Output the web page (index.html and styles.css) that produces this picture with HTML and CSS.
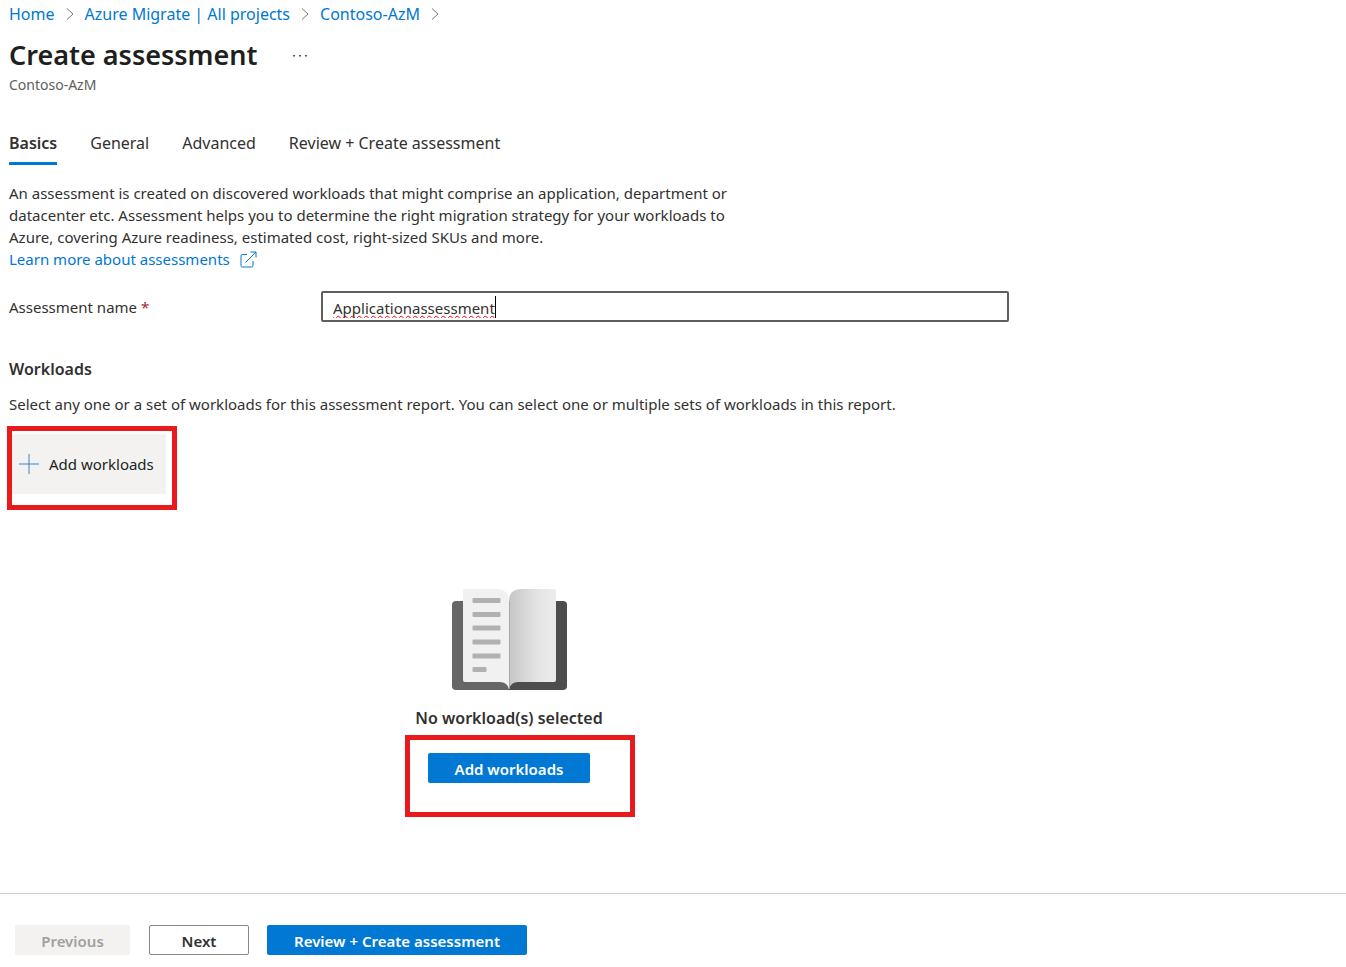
FILE: index.html
```html
<!DOCTYPE html>
<html lang="en">
<head>
<meta charset="utf-8">
<title>Create assessment</title>
<link rel="stylesheet" href="styles.css">
</head>
<body>
<main class="page">
  <nav class="breadcrumb" aria-label="Breadcrumb">
    <a href="#">Home</a>
    <svg class="chevron" viewBox="0 0 8 14"><path d="M1 1.500L7 7L1 12.500"/></svg>
    <a href="#">Azure Migrate | All projects</a>
    <svg class="chevron" viewBox="0 0 8 14"><path d="M1 1.500L7 7L1 12.500"/></svg>
    <a href="#">Contoso-AzM</a>
    <svg class="chevron" viewBox="0 0 8 14"><path d="M1 1.500L7 7L1 12.500"/></svg>
  </nav>
  <header class="title-row">
    <h1>Create assessment</h1>
    <button class="more" type="button" aria-label="More actions"><svg viewBox="0 0 16 4"><path d="M1 2h2v1.500H1zM7 2h2v1.500H7zM13 2h2v1.500h-2z"/></svg></button>
  </header>
  <p class="subtitle">Contoso-AzM</p>
  <div class="tabs" role="tablist">
    <button class="tab active" type="button" role="tab" aria-selected="true">Basics</button>
    <button class="tab" type="button" role="tab">General</button>
    <button class="tab" type="button" role="tab">Advanced</button>
    <button class="tab" type="button" role="tab">Review + Create assessment</button>
  </div>
  <div class="content">
    <p class="intro">An assessment is created on discovered workloads that might comprise an application, department or datacenter etc. Assessment helps you to determine the right migration strategy for your workloads to Azure, covering Azure readiness, estimated cost, right-sized SKUs and more.</p>
    <a class="learn" href="#">Learn more about assessments
      <svg viewBox="0 0 17 17"><path d="M7 3.500H2.500Q1 3.500 1 5V14.500Q1 16 2.500 16H11.500Q13 16 13 14.500V10M5.500 11.500L16 1M10.500 1H16V6.500"/></svg></a>
    <div class="field">
      <label for="name">Assessment name <span class="required">*</span></label>
      <div class="input-wrap">
        <input id="name" type="text" value="Applicationassessment">
        <span class="caret"></span>
      </div>
    </div>
    <h2>Workloads</h2>
    <p class="hint">Select any one or a set of workloads for this assessment report. You can select one or multiple sets of workloads in this report.</p>
    <div class="highlight toolbar">
      <button class="add" type="button"><svg viewBox="0 0 20 20"><path d="M0 10H20M10 0V20"/></svg>Add workloads</button>
    </div>
    <section class="empty">
      <svg class="book" viewBox="0 0 115 101">
        <defs><linearGradient id="pageShade"><stop offset="0" stop-color="#c6c6c6"/><stop offset=".6" stop-color="#e4e4e4"/><stop offset="1" stop-color="#ececec"/></linearGradient></defs>
        <path d="M4 12H57V101H4Q0 101 0 97V16Q0 12 4 12Z" fill="#666"/>
        <path d="M57 12H111Q115 12 115 16V97Q115 101 111 101H57Z" fill="#4d4d4d"/>
        <path d="M13 0H47Q57 1 57 12V100Q55 93 48 93H13Q11 93 11 91V2Q11 0 13 0Z" fill="#f1f1f1"/>
        <path d="M68 0H102Q104 0 104 2V91Q104 93 102 93H66Q59 93 57 100V12Q57 1 68 0Z" fill="url(#pageShade)"/>
        <path d="M57.500 12V100" stroke="#aaa"/>
        <g fill="#b1b1b1">
          <rect x="20.500" y="9" width="28" height="5" rx="1"/>
          <rect x="20.500" y="23" width="28" height="5" rx="1"/>
          <rect x="20.500" y="36.500" width="28" height="5" rx="1"/>
          <rect x="20.500" y="50.500" width="28" height="5" rx="1"/>
          <rect x="20.500" y="64.500" width="28" height="5" rx="1"/>
          <rect x="20.500" y="78" width="14" height="5" rx="1"/>
        </g>
      </svg>
      <h3>No workload(s) selected</h3>
      <div class="highlight callout">
        <button class="btn primary add-main" type="button">Add workloads</button>
      </div>
    </section>
  </div>
</main>
<footer class="footer">
  <button class="btn previous" type="button" disabled>Previous</button>
  <button class="btn next" type="button">Next</button>
  <button class="btn primary review" type="button">Review + Create assessment</button>
</footer>
</body>
</html>
```
FILE: styles.css
```css
* { box-sizing: border-box; }
body {
  margin: 0;
  min-height: 100vh;
  display: flex;
  flex-direction: column;
  background: #fff;
  color: #323130;
  font: 15px/22px "Noto Sans", "Open Sans", sans-serif;
}
h1, h2, h3, p { margin: 0; }
button, input { font: inherit; color: inherit; }
button { border: 0; background: none; padding: 0; }
a { color: #0078d4; text-decoration: none; }
svg { display: block; flex: none; }
.page { flex: 1; padding: 0 9px; }
.breadcrumb { display: flex; align-items: center; gap: 11px; font-size: 16px; line-height: 28px; }
.chevron { width: 8px; height: 14px; fill: none; stroke: #777; }
.title-row { display: flex; align-items: center; gap: 34px; padding-top: 8px; }
h1 { font-size: 27px; line-height: 38px; font-weight: 600; color: #201f1e; }
.more svg { width: 16px; height: 4px; fill: #555; }
.subtitle { font-size: 14px; line-height: 22px; color: #605e5c; }
.tabs { display: flex; gap: 33px; padding-top: 35px; }
.tab { font-size: 16px; line-height: 24px; padding-bottom: 7px; border-bottom: 3px solid transparent; }
.tab.active { font-weight: 600; border-color: #0078d4; }
.content { max-width: 1000px; padding-top: 17px; }
.intro { max-width: 740px; }
.learn { display: flex; align-items: center; gap: 10px; }
.learn svg { width: 17px; height: 17px; fill: none; stroke: #0078d4; }
.field { display: grid; grid-template-columns: 312px 1fr; align-items: center; padding-top: 21px; }
.required { color: #a4262c; }
.input-wrap { position: relative; }
.input-wrap input {
  display: block;
  width: 100%;
  height: 31px;
  padding: 2px 10px 0;
  border: 2px solid #605e5c;
  border-radius: 2px;
  outline: 0;
  text-decoration: underline wavy #f00 1px;
  text-decoration-skip-ink: none;
}
.caret { position: absolute; left: 174px; top: 5px; width: 1px; height: 22px; background: #000; }
h2 { font-size: 16px; line-height: 24px; font-weight: 600; padding-top: 35px; }
.hint { padding-top: 12px; }
.highlight { border: 5px solid #e81a1c; width: fit-content; }
.toolbar { margin: 11px 0 0 -2px; padding: 3px 6px 11px 0; }
.add { display: flex; align-items: center; gap: 10px; height: 60px; padding: 0 12px 0 7px; background: #f3f2f1; color: #201f1e; }
.add svg { width: 20px; height: 20px; fill: none; stroke: #3b83c8; }
.empty { display: flex; flex-direction: column; align-items: center; padding-top: 79px; }
.book { width: 115px; height: 101px; }
h3 { font-size: 16px; line-height: 24px; font-weight: 600; padding-top: 16px; }
.callout { margin: 5px 0 0 22px; padding: 13px 40px 29px 18px; }
.btn { height: 30px; padding-top: 2px; border-radius: 2px; font-weight: 600; }
.primary { background: #0078d4; color: #fff; }
.add-main { display: block; width: 162px; }
.footer { display: flex; border-top: 1px solid #d2d0ce; padding: 31px 15px 12px; }
.previous { width: 115px; margin-right: 19px; background: #f3f2f1; color: #a19f9d; }
.next { width: 100px; margin-right: 18px; border: 1px solid #8a8886; }
.review { width: 260px; }
```
